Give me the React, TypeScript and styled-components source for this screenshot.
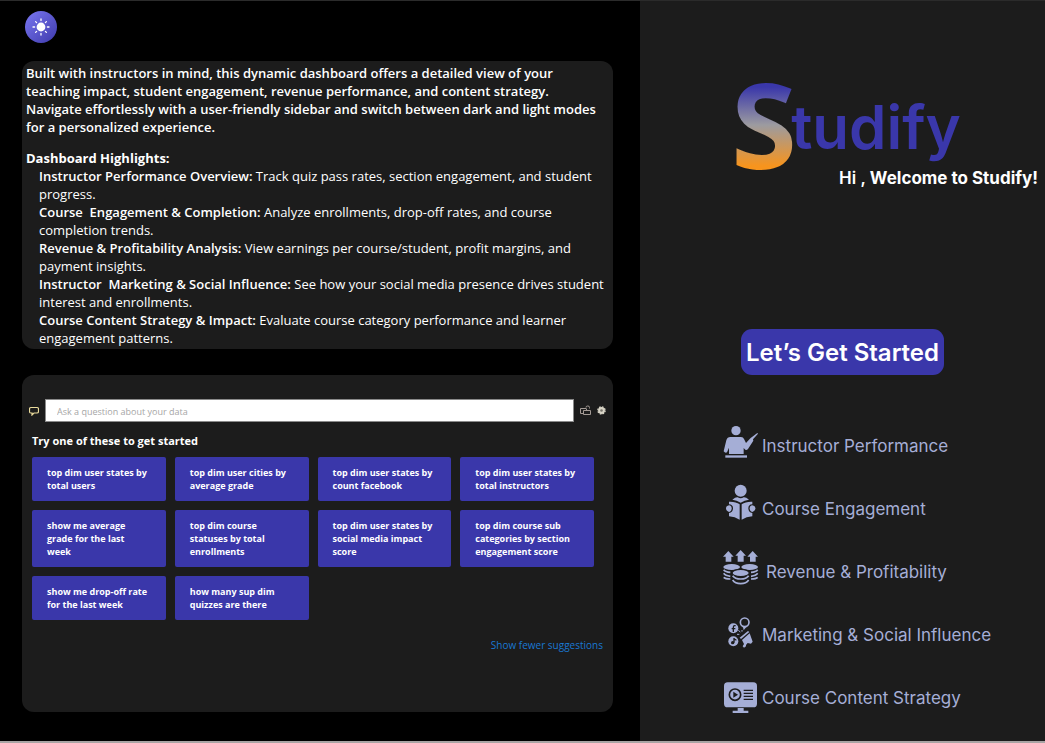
import React from "react";
import styled, { createGlobalStyle } from "styled-components";

const sans = `"Open Sans", "Noto Sans", sans-serif`;
const display = `Inter, "Liberation Sans", sans-serif`;
const indigo = "#3a37aa";
const panel = "#1c1c1c";
const lilac = "#a5aed6";

const GlobalStyle = createGlobalStyle`
  *, *::before, *::after { box-sizing: border-box; }
  body { margin: 0; background: #000; color: #fff; font-family: ${sans}; }
`;

const Page = styled.div`
  display: grid;
  grid-template-columns: 640fr 405fr;
  min-height: 100vh;
  border-top: 1px solid #2b2b2b;
  border-bottom: 2px solid #a8a4a4;
`;

const Main = styled.main`
  display: flex;
  flex-direction: column;
  align-items: stretch;
  padding: 10px 27px 29px 22px;
  background: #000;
`;

const ThemeButton = styled.button`
  display: flex;
  align-items: center;
  justify-content: center;
  width: 32px;
  height: 32px;
  margin: 0 0 18px 3px;
  padding: 0;
  border: 0;
  border-radius: 50%;
  background: linear-gradient(135deg, #7b78f2, #3d39ab);
  cursor: pointer;
`;

const IntroCard = styled.section`
  padding: 3px 4px 2px;
  border-radius: 12px;
  background: ${panel};
  font-size: 13px;
  line-height: 18px;
`;

const Lead = styled.p`
  margin: 0 0 13px;
  font-weight: 600;
`;

const CardTitle = styled.h2`
  margin: 0;
  font-size: 13px;
  font-weight: 700;
`;

const Highlights = styled.ul`
  margin: 0;
  padding: 0 0 0 13px;
  list-style: none;
`;

const Term = styled.strong`
  font-weight: 600;
  white-space: pre-wrap;
`;

const AskCard = styled.section`
  display: flex;
  flex-direction: column;
  flex: 1;
  margin-top: 26px;
  padding: 24px 7px 20px;
  border-radius: 12px;
  background: ${panel};
`;

const AskBar = styled.form`
  display: flex;
  align-items: center;
  gap: 6px;
`;

const AskInput = styled.input`
  flex: 1;
  min-width: 0;
  height: 23px;
  padding: 2px 11px 0;
  border: 1px solid #8a8a8a;
  border-radius: 0;
  background: #fff;
  color: #222;
  font-family: ${sans};
  font-size: 9px;
  outline: 0;
  &::placeholder { color: #a6a6a6; opacity: 1; }
`;

const ToolButton = styled.button`
  display: flex;
  padding: 0;
  border: 0;
  background: none;
  cursor: pointer;
`;

const Prompt = styled.h2`
  margin: 10px 3px 7px;
  font-size: 11px;
  line-height: 18px;
  font-weight: 700;
`;

const Suggestions = styled.div`
  display: grid;
  grid-template-columns: repeat(4, 1fr);
  gap: 9px;
  margin: 0 12px 0 3px;
`;

const Suggestion = styled.button`
  display: flex;
  align-items: center;
  min-height: 44px;
  padding: 9px 0 9px 15px;
  border: 0;
  border-radius: 2px;
  background: ${indigo};
  color: #fff;
  font-family: ${sans};
  font-size: 9px;
  line-height: 13px;
  font-weight: 700;
  text-align: left;
  white-space: pre-line;
  cursor: pointer;
`;

const FewerLink = styled.a`
  align-self: flex-end;
  margin: 17px 3px 0;
  color: #1a78d2;
  font-size: 10px;
  line-height: 16px;
  text-decoration: none;
`;

const Side = styled.aside`
  display: flex;
  flex-direction: column;
  padding: 72px 7px 20px 83px;
  background: ${panel};
  font-family: ${display};
`;

const Logo = styled.h1`
  display: flex;
  align-items: flex-start;
  margin: 0 0 0 8px;
  height: 94px;
  color: ${indigo};
  font-size: 60px;
  line-height: 108px;
  font-weight: 600;
`;

const LogoInitial = styled.span`
  margin-right: -6px;
  padding: 0 2px;
  font-family: "Open Sans", sans-serif;
  font-size: 113px;
  line-height: 100px;
  font-weight: 600;
  background: linear-gradient(${indigo} 14%, #9c9ba0 52%, #f7941d 93%);
  background-clip: text;
  -webkit-background-clip: text;
  color: transparent;
  -webkit-text-stroke: 4px transparent;
`;

const Welcome = styled.p`
  margin: 0;
  text-align: right;
  font-size: 17px;
  line-height: 22px;
  font-weight: 700;
`;

const Greeting = styled.span`
  font-weight: 600;
`;

const StartButton = styled.button`
  align-self: flex-start;
  height: 46px;
  margin: 140px 0 0 18px;
  padding: 0 5px;
  border: 0;
  border-radius: 11px;
  background: ${indigo};
  color: #fff;
  font-family: ${display};
  font-size: 24px;
  font-weight: 600;
  cursor: pointer;
`;

const Nav = styled.nav`
  display: flex;
  flex-direction: column;
  gap: 23px;
  margin-top: 51px;
`;

const NavLink = styled.a`
  display: flex;
  align-items: center;
  gap: 4px;
  height: 40px;
  color: ${lilac};
  font-size: 17px;
  line-height: 22px;
  text-decoration: none;
`;

const NavIcon = styled.svg<{ $wide?: boolean }>`
  flex: none;
  align-self: flex-start;
  width: 35px;
  height: 35px;
  margin-right: ${(p) => (p.$wide ? 4 : 0)}px;
  fill: ${lilac};
  overflow: visible;
`;

const highlights = [
  ["Instructor Performance Overview:", "Track quiz pass rates, section engagement, and student progress."],
  ["Course  Engagement & Completion:", "Analyze enrollments, drop-off rates, and course completion trends."],
  ["Revenue & Profitability Analysis:", "View earnings per course/student, profit margins, and payment insights."],
  ["Instructor  Marketing & Social Influence:", "See how your social media presence drives student interest and enrollments."],
  ["Course Content Strategy & Impact:", "Evaluate course category performance and learner engagement patterns."],
];

const suggestions = [
  "top dim user states by\ntotal users",
  "top dim user cities by\naverage grade",
  "top dim user states by\ncount facebook",
  "top dim user states by\ntotal instructors",
  "show me average\ngrade for the last\nweek",
  "top dim course\nstatuses by total\nenrollments",
  "top dim user states by\nsocial media impact\nscore",
  "top dim course sub\ncategories by section\nengagement score",
  "show me drop-off rate\nfor the last week",
  "how many sup dim\nquizzes are there",
];

const SunIcon = () => (
  <svg width="18" height="18" viewBox="0 0 18 18" stroke="#fff" strokeWidth="1.3" strokeLinecap="round" aria-hidden="true">
    <circle cx="9" cy="9" r="4.4" fill="#fff" stroke="none" />
    <path d="M9 1v1.6M9 15.4V17M1 9h1.6M15.4 9H17M3.6 3.6l1 1M13.4 13.4l1 1M3.6 14.4l1-1M13.4 4.6l1-1" />
  </svg>
);

const ChatIcon = () => (
  <svg width="10" height="10" viewBox="0 0 10 10" fill="none" aria-hidden="true">
    <path d="M2 1.500H8Q9.500 1.500 9.500 3V5.500Q9.500 7 8 7H5L3 9V7H2Q.5 7 .5 5.500V3Q.5 1.500 2 1.500Z" stroke="#eadb9c" strokeWidth="1.2" />
  </svg>
);

const LockIcon = () => (
  <svg width="11" height="11" viewBox="0 0 11 11" fill="none" stroke="#a39a94" aria-hidden="true">
    <path d="M3.500 5.500h7v4h-7zM3 8.500H.5v-5H6M6.500 5V3.500M6 2.500Q6 1 7.500 1H8q1.500 0 1.500 1.500V3.500" />
  </svg>
);

const GearIcon = () => (
  <svg width="9" height="9" viewBox="0 0 9 9" aria-hidden="true">
    <circle cx="4.500" cy="4.500" r="3.400" fill="#d8d4c6" />
    <circle cx="4.500" cy="4.500" r="3.600" fill="none" stroke="#d8d4c6" strokeWidth="1.400" strokeDasharray="1.600 1.220" />
    <circle cx="4.500" cy="4.500" r="1.300" fill="#77736a" />
  </svg>
);

const InstructorIcon = () => (
  <NavIcon viewBox="40 33 105 105" aria-hidden="true">
    <circle cx="79" cy="47" r="14" />
    <path d="M62 66H94Q101 66 103 72L109 84L120 72L123 69L143 54L145 56L130 73L131 77L115 102Q109 108 104 101L102 99V117H58V98L52 112Q47 116 42 109L50 76Q53 66 62 66Z" />
    <rect x="47" y="121" width="65" height="7" />
  </NavIcon>
);

const ReaderIcon = () => (
  <NavIcon viewBox="40 222 105 105" aria-hidden="true">
    <circle cx="93" cy="227" r="18" />
    <path d="M68 254Q78 246 84 247Q93 253 102 247Q108 246 118 254Q105 256 93 263Q81 256 68 254Z" />
    <path d="M58 260Q78 259 90 268V314Q76 305 58 304V294Q70 292 70 280Q70 269 58 268Z" />
    <path d="M128 260Q108 259 96 268V314Q110 305 128 304V294Q116 292 116 280Q116 269 128 268Z" />
    <path d="M58 271Q66 272 66 280Q66 289 58 291Q49 288 49 280Q49 273 58 271Z" />
    <path d="M128 271Q120 272 120 280Q120 289 128 291Q137 288 137 280Q137 273 128 271Z" />
  </NavIcon>
);

const RevenueIcon = () => (
  <NavIcon $wide viewBox="40 51 105 105" aria-hidden="true">
    <path d="M56 48L72 65H65V80H48V65H40ZM93 45L109 62H102V80H84V62H77ZM129 48L145 65H138V80H121V65H113Z" />
    <ellipse cx="66" cy="96" rx="25" ry="9" />
    <ellipse cx="120" cy="96" rx="25" ry="9" />
    <ellipse cx="93" cy="114" rx="26" ry="11" stroke="#1c1c1c" strokeWidth="4" />
    <g fill="none" stroke={lilac} strokeWidth="5">
      <path d="M42 104Q47 111 62 112M42 115Q47 122 62 124M42 127Q47 132 62 132M144 104Q139 111 124 112M144 115Q139 122 124 124M144 127Q139 132 124 132" />
      <path d="M69 122Q76 132 93 132T117 122M69 135Q76 146 93 146T117 135" />
    </g>
  </NavIcon>
);

const MarketingIcon = () => (
  <NavIcon viewBox="40 240 105 105" aria-hidden="true">
    <circle cx="105" cy="262" r="13" fill="none" stroke={lilac} strokeWidth="5" />
    <path d="M100 276L102 286L110 276Z" />
    <circle cx="71" cy="280" r="15" />
    <circle cx="71" cy="319" r="15" />
    <path d="M78 272H75Q71 272 71 277V291M66 281H77" fill="none" stroke="#1c1c1c" strokeWidth="4" />
    <path d="M73 309V323M73 310Q75 315 80 315" fill="none" stroke="#1c1c1c" strokeWidth="4" />
    <circle cx="69" cy="323" r="5" fill="#1c1c1c" />
    <path d="M86 286L92 291M82 298H89M97 285V290" stroke={lilac} strokeWidth="3" />
    <path d="M90 308L115 288L119 291L94 312Z" />
    <path d="M97 315L120 295L129 320L124 326L114 324L109 330V334L103 338L99 334L103 327Z" />
  </NavIcon>
);

const ContentIcon = () => (
  <NavIcon viewBox="40 429 105 105" aria-hidden="true">
    <rect x="43" y="442" width="99" height="75" rx="11" />
    <path d="M84 519H102V527H116V534H69V527H84Z" />
    <circle cx="76" cy="479" r="17" fill="none" stroke="#1c1c1c" strokeWidth="5" />
    <path d="M71 470L85 479L71 488Z" fill="#1c1c1c" />
    <path d="M102 466H130M102 475H130M102 484H130M102 493H130" stroke="#1c1c1c" strokeWidth="4" />
  </NavIcon>
);

const navItems = [
  { label: "Instructor Performance", Icon: InstructorIcon },
  { label: "Course Engagement", Icon: ReaderIcon },
  { label: "Revenue & Profitability", Icon: RevenueIcon },
  { label: "Marketing & Social Influence", Icon: MarketingIcon },
  { label: "Course Content Strategy", Icon: ContentIcon },
];

export default function App() {
  return (
    <>
      <GlobalStyle />
      <Page>
        <Main>
          <ThemeButton type="button" aria-label="Switch to light mode"><SunIcon /></ThemeButton>
          <IntroCard>
            <Lead>
              Built with instructors in mind, this dynamic dashboard offers a detailed view of your
              teaching impact, student engagement, revenue performance, and content strategy.
              <br />
              Navigate effortlessly with a user-friendly sidebar and switch between dark and light modes
              for a personalized experience.
            </Lead>
            <CardTitle>Dashboard Highlights:</CardTitle>
            <Highlights>
              {highlights.map(([term, text]) => (
                <li key={term}><Term>{term}</Term> {text}</li>
              ))}
            </Highlights>
          </IntroCard>
          <AskCard>
            <AskBar onSubmit={(e) => e.preventDefault()}>
              <ChatIcon />
              <AskInput type="text" aria-label="Question" placeholder="Ask a question about your data" />
              <ToolButton type="button" aria-label="Convert to visual"><LockIcon /></ToolButton>
              <ToolButton type="button" aria-label="Settings"><GearIcon /></ToolButton>
            </AskBar>
            <Prompt>Try one of these to get started</Prompt>
            <Suggestions>
              {suggestions.map((s) => (
                <Suggestion key={s} type="button">{s}</Suggestion>
              ))}
            </Suggestions>
            <FewerLink href="#fewer">Show fewer suggestions</FewerLink>
          </AskCard>
        </Main>
        <Side>
          <Logo><LogoInitial>S</LogoInitial>tudify</Logo>
          <Welcome><Greeting>Hi ,</Greeting> Welcome to Studify!</Welcome>
          <StartButton type="button">Let’s Get Started</StartButton>
          <Nav>
            {navItems.map(({ label, Icon }) => (
              <NavLink key={label} href="#"><Icon />{label}</NavLink>
            ))}
          </Nav>
        </Side>
      </Page>
    </>
  );
}
